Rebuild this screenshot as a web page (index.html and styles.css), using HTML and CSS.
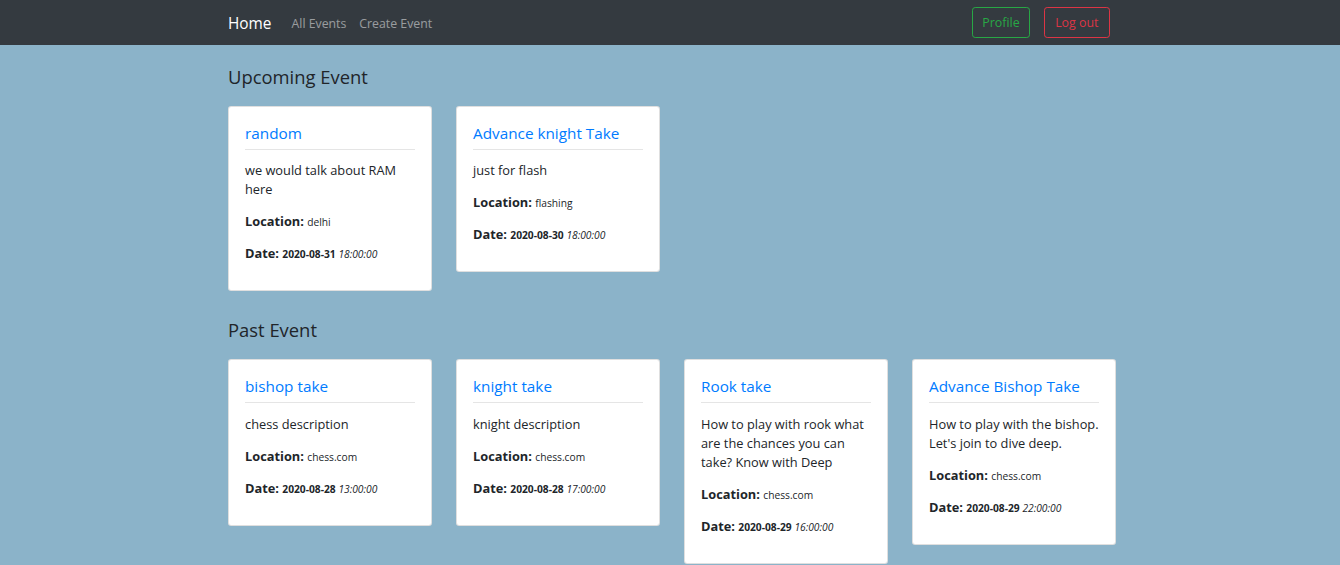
FILE: index.html
```html
<!DOCTYPE html>
<html>
<head>
<meta charset="utf-8">
<link rel="stylesheet" href="styles.css">
</head>
<body>
<nav class="navbar">
  <div class="nav-inner">
    <div class="nav-left">
      <a class="brand">Home</a>
      <a class="nav-link">All Events</a>
      <a class="nav-link">Create Event</a>
    </div>
    <div class="nav-right">
      <a class="btn btn-green">Profile</a>
      <a class="btn btn-red">Log out</a>
    </div>
  </div>
</nav>
<main class="container">
  <h4 class="section-title">Upcoming Event</h4>
  <div class="cards">
    <div class="card">
      <h5 class="card-title">random</h5>
      <hr class="divider">
      <p>we would talk about RAM here</p>
      <p><b>Location:</b> <small>delhi</small></p>
      <p><b>Date:</b> <small><b>2020-08-31</b> <i>18:00:00</i></small></p>
    </div>
    <div class="card">
      <h5 class="card-title">Advance knight Take</h5>
      <hr class="divider">
      <p>just for flash</p>
      <p><b>Location:</b> <small>flashing</small></p>
      <p><b>Date:</b> <small><b>2020-08-30</b> <i>18:00:00</i></small></p>
    </div>
  </div>
  <h4 class="section-title past">Past Event</h4>
  <div class="cards">
    <div class="card">
      <h5 class="card-title">bishop take</h5>
      <hr class="divider">
      <p>chess description</p>
      <p><b>Location:</b> <small>chess.com</small></p>
      <p><b>Date:</b> <small><b>2020-08-28</b> <i>13:00:00</i></small></p>
    </div>
    <div class="card">
      <h5 class="card-title">knight take</h5>
      <hr class="divider">
      <p>knight description</p>
      <p><b>Location:</b> <small>chess.com</small></p>
      <p><b>Date:</b> <small><b>2020-08-28</b> <i>17:00:00</i></small></p>
    </div>
    <div class="card">
      <h5 class="card-title">Rook take</h5>
      <hr class="divider">
      <p>How to play with rook what are the chances you can take? Know with Deep</p>
      <p><b>Location:</b> <small>chess.com</small></p>
      <p><b>Date:</b> <small><b>2020-08-29</b> <i>16:00:00</i></small></p>
    </div>
    <div class="card">
      <h5 class="card-title">Advance Bishop Take</h5>
      <hr class="divider">
      <p>How to play with the bishop. Let's join to dive deep.</p>
      <p><b>Location:</b> <small>chess.com</small></p>
      <p><b>Date:</b> <small><b>2020-08-29</b> <i>22:00:00</i></small></p>
    </div>
  </div>
</main>
</body>
</html>
```
FILE: styles.css
```css
* { box-sizing: border-box; }
html, body { margin: 0; padding: 0; }
body {
  background: #8bb3c9;
  font-family: "Open Sans", "Noto Sans", sans-serif;
  font-size: 12.8px;
  line-height: 19.2px;
  color: #212529;
  height: 565px;
  overflow: hidden;
}
.navbar {
  background: #343a40;
  height: 45px;
}
.nav-inner {
  width: 882px;
  margin-left: 228px;
  height: 45px;
  display: flex;
  align-items: center;
  justify-content: space-between;
}
.nav-left { display: flex; align-items: center; padding-top: 3px; }
.brand {
  color: #fff;
  font-size: 15.4px;
  margin-right: 20px;
}
.nav-link {
  color: rgba(255,255,255,.5);
  font-size: 12.3px;
  margin-right: 13px;
}
.nav-right { display: flex; gap: 14px; }
.btn {
  display: inline-block;
  border: 1px solid;
  border-radius: 3.2px;
  padding: 4.8px 9px;
  font-size: 12.4px;
  line-height: 19.2px;
}
.btn-green { color: #28a745; border-color: #28a745; }
.btn-red { color: #dc3545; border-color: #dc3545; padding: 4.8px 10.5px; }
.container {
  margin-left: 228px;
  width: 890px;
}
.section-title {
  font-size: 18.4px;
  font-weight: 400;
  line-height: 23px;
  margin: 20px 0 18px;
}
.section-title.past { margin-top: 27px; margin-bottom: 18px; }
.cards {
  display: flex;
  align-items: flex-start;
  gap: 24px;
}
.card {
  width: 204px;
  background: #fff;
  border: 1px solid rgba(0,0,0,.125);
  border-radius: 3.2px;
  padding: 17px 16px 14px;
}
.card-title {
  margin: 0 0 5.5px;
  font-size: 15.3px;
  font-weight: 400;
  line-height: 19.2px;
  color: #007bff;
}
.divider {
  border: 0;
  border-top: 1px solid rgba(0,0,0,.1);
  margin: 0 0 11.5px;
}
.card p { margin: 0 0 12.8px; }
.card small { font-size: 10.24px; line-height: 1; }
```
